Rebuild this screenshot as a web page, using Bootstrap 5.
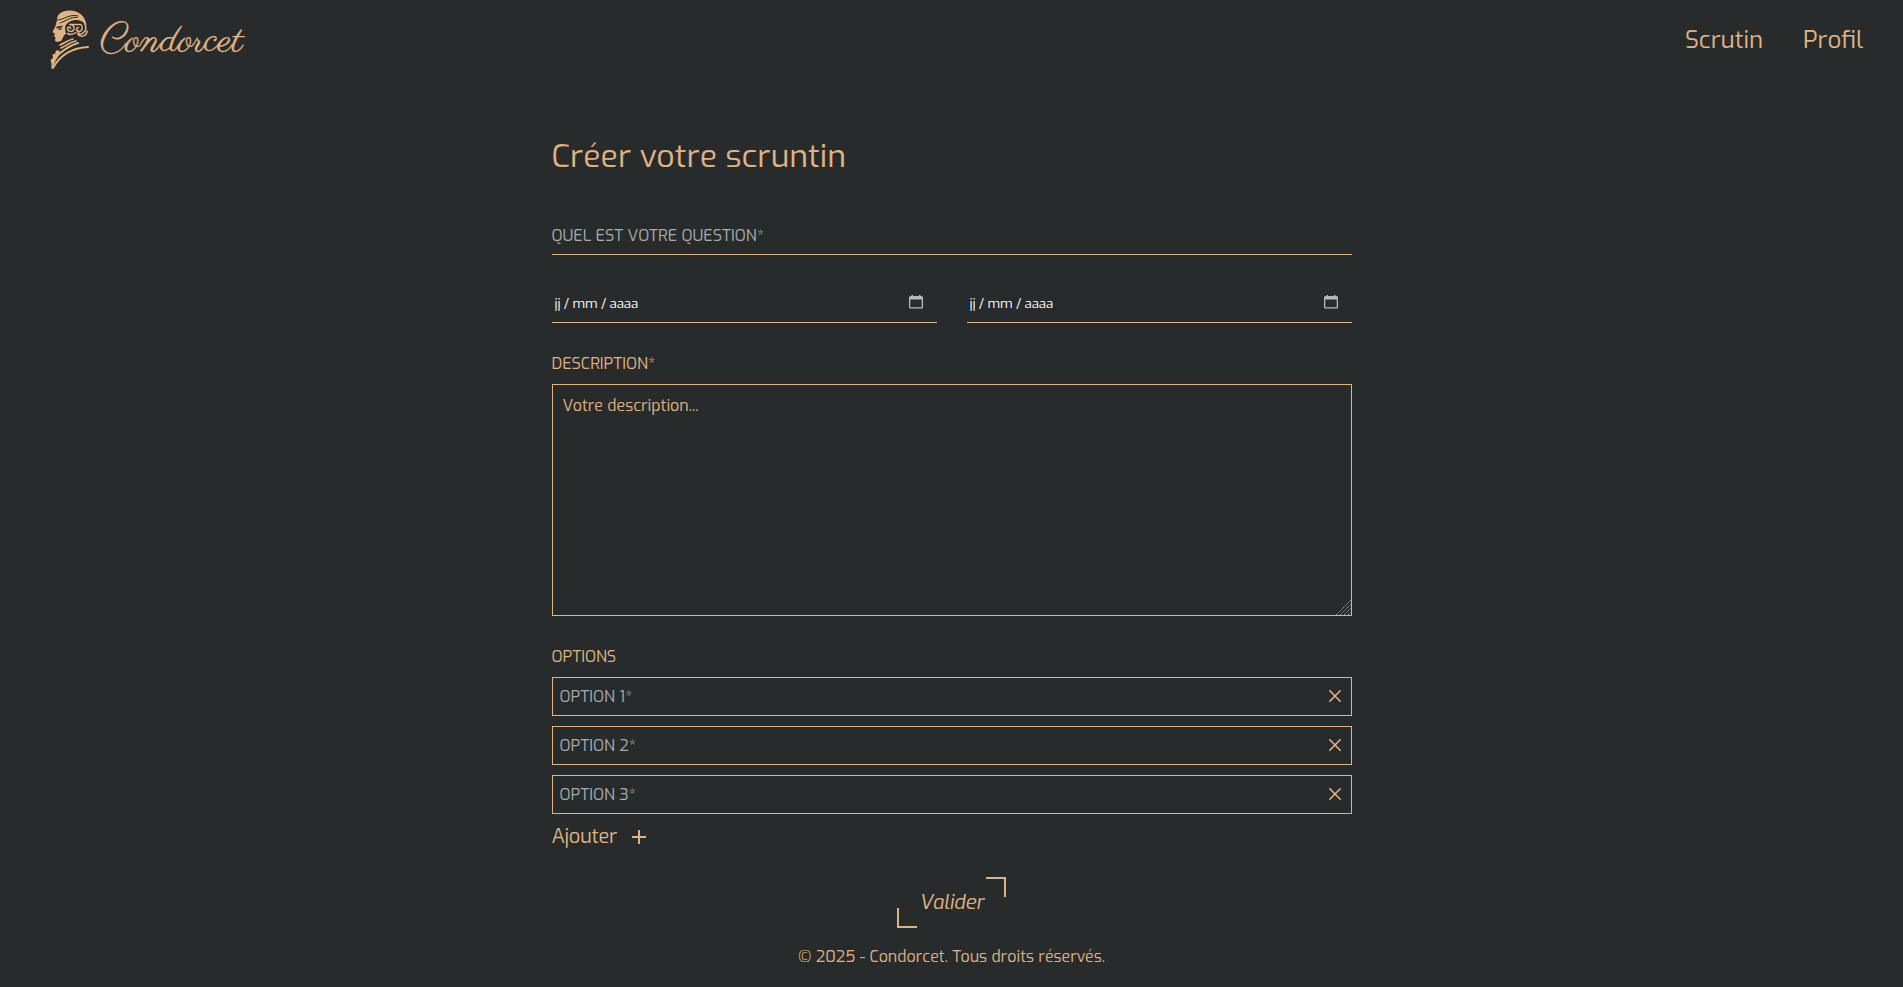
<!DOCTYPE html>
<html lang="fr">
<head>
<meta charset="utf-8">
<meta name="viewport" content="width=device-width, initial-scale=1">
<title>Condorcet</title>
<link href="https://cdn.jsdelivr.net/npm/bootstrap@5.3.0/dist/css/bootstrap.min.css" rel="stylesheet">
<style>
:root{--gold:#e1b382;--ink:#272b2b}
body{background:var(--ink);color:var(--gold);font-family:Exo,"Exo 2",Roboto,sans-serif;font-size:16px;line-height:24px;height:987px;overflow:hidden}
.topbar{height:80px;padding:0 40px 0 49px}
.topbar a{color:var(--gold);font-size:24px;text-decoration:none;line-height:36px}
.menu{gap:40px}
.l-scrutin{width:78px}.l-profil{width:60px}
.sheet{width:800px;padding-top:57px}
h1{font-size:32px;line-height:38px;font-weight:400;height:38px;margin:0}
.line-field{border-bottom:1px solid var(--gold);color:#a8acac}
.question{margin-top:49px;height:31px;line-height:24px}
.dates{gap:30px;margin-top:30px}
.date-field{height:38px;padding:9px 14px 0 3px;font-size:13.33px;line-height:20px;color:#fff;letter-spacing:-.15px}
.date-field svg{margin-top:1px}
.caps{line-height:24px;height:24px;margin-top:29px}
.area{height:232px;border:1px solid var(--gold);padding:9px 10px;margin-top:8px;position:relative}
.grip{position:absolute;right:0;bottom:0}
.opts{gap:10px;margin-top:8px}
.opt{height:39px;border:1px solid var(--gold);color:#a8acac;padding:0 10px 0 7px}
.opt svg{margin-top:-2px}
.add{font-size:20px;line-height:30px;margin-top:8px;gap:15px;letter-spacing:-.3px}
.send{margin-top:25px}
.validate{width:109px;height:51px;position:relative;font-size:20px;font-style:italic;background:none;border:0;color:var(--gold);padding:0}
.validate::before,.validate::after{content:"";position:absolute;width:20px;height:20px}
.validate::before{right:0;top:0;border-top:2px solid;border-right:2px solid}
.validate::after{left:0;bottom:0;border-bottom:2px solid;border-left:2px solid}
footer{margin-top:17px}
svg{display:block;overflow:visible}
</style>
</head>
<body>
<nav class="topbar d-flex justify-content-between align-items-center">
  <svg width="200" height="80" viewBox="50 0 200 80" fill="none" stroke="#e1b382" stroke-linecap="round">
    <path d="M58 20C58 14 63 10.500 70 10.500C79 10.500 86 15 87.500 25C83 20 77 18.500 71 21.500C68 23 66 25 66 29L67 34C64 35 64 39 62 41C60 42 56 42.500 56 40L56.500 37.500L55 36L56 34L53.500 32C55 29 56.500 27 57 24Z" fill="#e1b382" stroke="none"/>
    <path d="M58.500 20C65 20 70 13.500 79 16M61 23C67 21.500 71 16.500 78 17.500" stroke="#272b2b" stroke-width="1"/>
    <path d="M58 27.500L63 26.500M60 29H62" stroke="#272b2b" stroke-width="1.400"/>
    <path d="M71 24.500C74 24.500 75.500 26.500 75 29C74 32.500 68.500 32 68.500 28.500C69 26.500 71.500 26.500 71.500 28.500" stroke-width="1.500"/>
    <path d="M71 24.500H82C84 26 83.500 31 80.500 31.500C77 31.500 76.500 27.500 79.500 27.500" stroke-width="1.500"/>
    <path d="M85.500 23C87.500 27 87 31 84 33C82 35 79 34 79.500 32.500M88 31C88 36 82 38 78.500 34" stroke-width="1.500"/>
    <path d="M68.500 33.500C71 35 74 34.500 77 32.500" stroke-width="1.500"/>
    <path d="M61 45C66 43 69 40 74 39M62 48C67 46 71 42 77 41" stroke-width="1.700"/>
    <path d="M54 68C60 57 71 48 89 47M60 54C66 49 72 45 79 43" stroke-width="1.900"/>
    <path d="M52 69C53 65 52.500 63 51.500 60L54 58L53.500 54L56 54L57 50.500L60.500 50.500L61 54C58 58 56 61 54 67Z" fill="#e1b382" stroke="none"/>
    <text x="101" y="50.500" textLength="143" lengthAdjust="spacingAndGlyphs" fill="#e1b382" stroke="#e1b382" stroke-width=".25" font-family="Parisienne,'Liberation Serif',cursive" font-size="38">Condorcet</text>
  </svg>
  <div class="menu d-flex"><a class="l-scrutin" href="#">Scrutin</a><a class="l-profil" href="#">Profil</a></div>
</nav>
<main class="sheet mx-auto">
  <h1>Créer votre scruntin</h1>
  <div class="line-field question">QUEL EST VOTRE QUESTION*</div>
  <div class="dates d-flex">
    <div class="line-field date-field flex-fill d-flex justify-content-between"><span>jj / mm / aaaa</span>
      <svg width="14" height="14" viewBox="0 0 14 14"><path d="M1.500 1H12.500Q14 1 14 2.500V12.500Q14 13.500 13 13.500H1Q0 13.500 0 12.500V2.500Q0 1 1.500 1ZM1.300 4.500V12.200H12.700V4.500ZM2.500 0H4V1H2.500ZM10 0H11.500V1H10Z" fill="#b4b8b8" fill-rule="evenodd"/></svg></div>
    <div class="line-field date-field flex-fill d-flex justify-content-between"><span>jj / mm / aaaa</span>
      <svg width="14" height="14" viewBox="0 0 14 14"><path d="M1.500 1H12.500Q14 1 14 2.500V12.500Q14 13.500 13 13.500H1Q0 13.500 0 12.500V2.500Q0 1 1.500 1ZM1.300 4.500V12.200H12.700V4.500ZM2.500 0H4V1H2.500ZM10 0H11.500V1H10Z" fill="#b4b8b8" fill-rule="evenodd"/></svg></div>
  </div>
  <div class="caps">DESCRIPTION*</div>
  <div class="area">Votre description...
    <svg class="grip" width="15" height="15" viewBox="0 0 15 15" stroke="#969a98" stroke-width="1" stroke-dasharray="1.4 .6"><path d="M0 15L15 0M4 15L15 4M8 15L15 8M12 15L15 12"/></svg></div>
  <div class="caps">OPTIONS</div>
  <div class="opts d-flex flex-column">
    <div class="opt d-flex align-items-center justify-content-between"><span>OPTION 1*</span><svg width="12" height="12" viewBox="0 0 12 12" stroke="#e1b382" stroke-width="1.6" stroke-linecap="round"><path d="M.8.8L11.2 11.2M11.2.8L.8 11.2"/></svg></div>
    <div class="opt d-flex align-items-center justify-content-between"><span>OPTION 2*</span><svg width="12" height="12" viewBox="0 0 12 12" stroke="#e1b382" stroke-width="1.6" stroke-linecap="round"><path d="M.8.8L11.2 11.2M11.2.8L.8 11.2"/></svg></div>
    <div class="opt d-flex align-items-center justify-content-between"><span>OPTION 3*</span><svg width="12" height="12" viewBox="0 0 12 12" stroke="#e1b382" stroke-width="1.6" stroke-linecap="round"><path d="M.8.8L11.2 11.2M11.2.8L.8 11.2"/></svg></div>
  </div>
  <div class="add d-flex align-items-center"><span>Ajouter</span><svg width="14" height="14" viewBox="0 0 14 14" stroke="#e1b382" stroke-width="2"><path d="M0 7H14M7 0V14"/></svg></div>
  <div class="send d-flex justify-content-center"><button class="validate">Valider</button></div>
</main>
<footer class="text-center">© 2025 - Condorcet. Tous droits réservés.</footer>
<script src="https://cdn.jsdelivr.net/npm/bootstrap@5.3.0/dist/js/bootstrap.bundle.min.js"></script>
</body>
</html>
